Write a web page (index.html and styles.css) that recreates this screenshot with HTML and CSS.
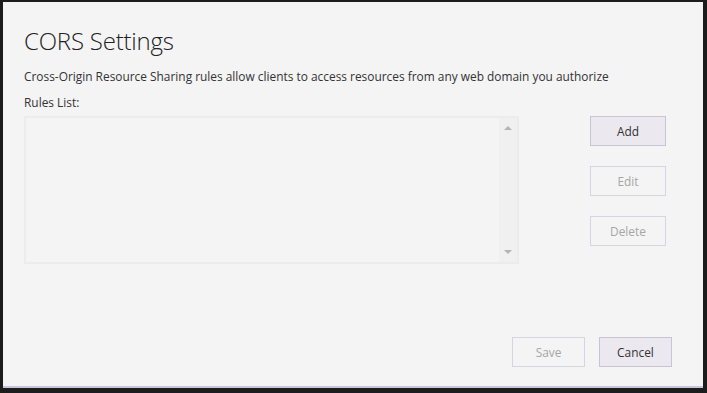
FILE: index.html
```html
<!DOCTYPE html>
<html lang="en">
<head>
    <meta charset="UTF-8">
    <title>CORS Settings</title>
    <link rel="stylesheet" href="styles.css">
</head>
<body>
    <div class="dialog">
        <h1>CORS Settings</h1>
        <p class="intro">Cross-Origin Resource Sharing rules allow clients to access resources from any web domain you authorize</p>
        <div class="list-label">Rules List:</div>

        <div class="rules-row">
            <div class="rules-list">
                <div class="rules-items"></div>
                <div class="scrollbar">
                    <span class="arrow up"></span>
                    <span class="arrow down"></span>
                </div>
            </div>
            <div class="side-buttons">
                <button class="btn">Add</button>
                <button class="btn" disabled>Edit</button>
                <button class="btn" disabled>Delete</button>
            </div>
        </div>

        <div class="footer">
            <button class="btn small" disabled>Save</button>
            <button class="btn small">Cancel</button>
        </div>
    </div>
</body>
</html>
```

FILE: styles.css
```css
html, body {
    height: 100%;
}
body {
    margin: 0;
    background: #1c1c1c;
    font-family: 'Open Sans', 'Noto Sans', sans-serif;
    color: #333;
}
.dialog {
    box-sizing: border-box;
    height: calc(100% - 7px);
    margin: 2px 4px 5px 3px;
    background: #f4f4f4;
    border-bottom: 2px solid #c9c5dd;
    padding: 0 31px 0 21px;
    display: flex;
    flex-direction: column;
}
h1 {
    margin: 23px 0 0;
    font-size: 24px;
    font-weight: 300;
    letter-spacing: -0.2px;
    color: #222;
    line-height: 32px;
}
.intro {
    margin: 11px 0 0;
    font-size: 11.9px;
    line-height: 16px;
    color: #333;
}
.list-label {
    margin-top: 10px;
    font-size: 11.9px;
    line-height: 16px;
    color: #333;
}
.rules-row {
    display: flex;
    margin-top: 6px;
}
.rules-list {
    width: 495px;
    height: 148px;
    box-sizing: border-box;
    border: 2px solid #ececec;
    display: flex;
    background: #f4f4f4;
}
.rules-items {
    flex: 1;
}
.scrollbar {
    width: 18px;
    background: #f0f0f0;
    display: flex;
    flex-direction: column;
    justify-content: space-between;
    align-items: center;
    padding: 8px 0;
}
.arrow {
    width: 0;
    height: 0;
    border-left: 4px solid transparent;
    border-right: 4px solid transparent;
}
.arrow.up {
    border-bottom: 4px solid #b4b4b4;
}
.arrow.down {
    border-top: 4px solid #b4b4b4;
}
.side-buttons {
    margin-left: 71px;
    display: flex;
    flex-direction: column;
    gap: 20px;
}
.btn {
    width: 76px;
    height: 30px;
    box-sizing: border-box;
    border: 1px solid #c8c4d8;
    background: #ebe9ef;
    font-family: inherit;
    font-size: 11.9px;
    color: #333;
    padding: 0;
}
.btn:disabled {
    background: #f4f4f4;
    border-color: #d6d3e2;
    color: #a6a6a6;
}
.footer {
    margin-top: auto;
    margin-bottom: 19px;
    display: flex;
    justify-content: flex-end;
    gap: 14px;
}
.btn.small {
    width: 73px;
}
```
